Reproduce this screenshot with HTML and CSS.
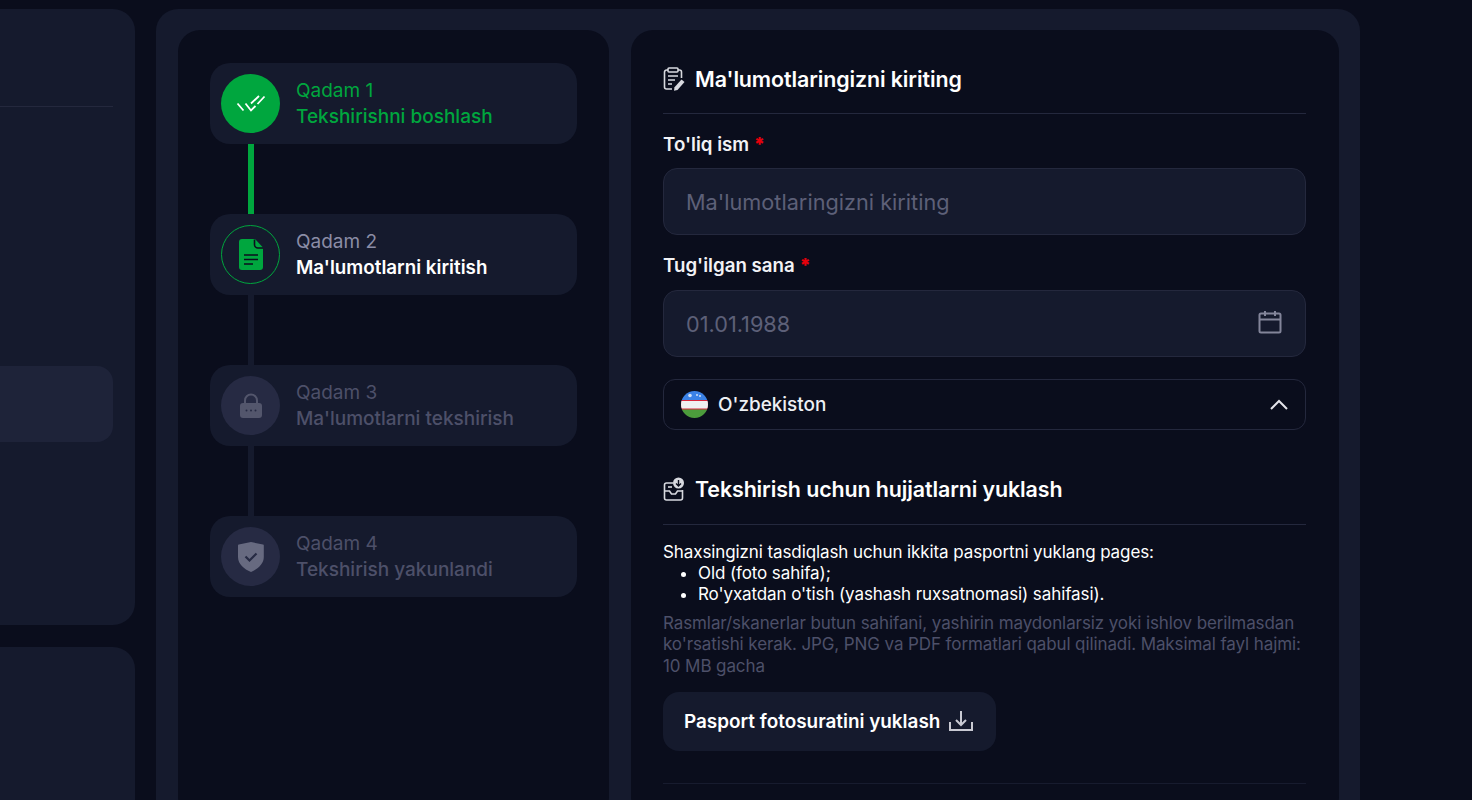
FILE: index.html
```html
<!DOCTYPE html>
<html lang="uz">
<head>
<meta charset="utf-8">
<title>Tekshirish</title>
<link rel="stylesheet" href="styles.css">
</head>
<body>
<div class="page">
  <aside class="side">
    <div class="side-card top">
      <div class="side-rule"></div>
      <div class="side-active"></div>
    </div>
    <div class="side-card bottom"></div>
  </aside>
  <main class="panel">
    <section class="stepper">
      <div class="step done">
        <span class="badge"><svg width="30" height="18" viewBox="0 0 30 18" fill="none" stroke="#fff" stroke-width="1.800"><path d="M1.500 8.500l6 7M9.500 8.500l5.500 7 4.500-4.500M21.500 9l7-7.500M15 8.500l8-7.500"/></svg></span>
        <div class="step-text"><span class="num">Qadam 1</span><span class="name">Tekshirishni boshlash</span></div>
      </div>
      <div class="line green"></div>
      <div class="step current">
        <span class="badge"><svg width="26" height="33" viewBox="0 0 26 33"><path fill="#00a63e" d="M4 1h13l8 8.500V29a3 3 0 0 1-3 3H4a3 3 0 0 1-3-3V4a3 3 0 0 1 3-3z"/><path stroke="#0b0e1e" stroke-width="1.600" d="M16.500 1.500v5a3.500 3.500 0 0 0 3.500 3.500h5M6 17h14M6 21.500h14M6 26h9" fill="none"/></svg></span>
        <div class="step-text"><span class="num">Qadam 2</span><span class="name">Ma'lumotlarni kiritish</span></div>
      </div>
      <div class="line"></div>
      <div class="step locked">
        <span class="badge"><svg width="24" height="26" viewBox="0 0 24 26"><path fill="none" stroke="#53566c" stroke-width="2" d="M6 12V7.500a6 6 0 0 1 12 0V12"/><rect x="1" y="10" width="22" height="15" rx="3" fill="#53566c"/><circle cx="7.500" cy="17.500" r="1" fill="#262a43"/><circle cx="12" cy="17.500" r="1" fill="#262a43"/><circle cx="16.500" cy="17.500" r="1" fill="#262a43"/></svg></span>
        <div class="step-text"><span class="num">Qadam 3</span><span class="name">Ma'lumotlarni tekshirish</span></div>
      </div>
      <div class="line"></div>
      <div class="step locked">
        <span class="badge"><svg width="26" height="30" viewBox="0 0 26 30"><path fill="#676a80" d="M13 0l12 2.500a1 1 0 0 1 .8 1V15c0 7-6 12-12.800 15C6 27 0 22 0 15V3.500a1 1 0 0 1 .8-1z"/><path fill="none" stroke="#262a43" stroke-width="2.200" d="M7.500 14.500l4 4 7-7"/></svg></span>
        <div class="step-text"><span class="num">Qadam 4</span><span class="name">Tekshirish yakunlandi</span></div>
      </div>
    </section>
    <section class="form">
      <div class="heading">
        <svg class="hicon" width="22" height="24" viewBox="0 0 22 24" fill="none" stroke="#d8d9df" stroke-width="1.600"><path d="M5 3H3.500A2 2 0 0 0 1.500 5v15a2 2 0 0 0 2 2H9M15 3h1.500a2 2 0 0 1 2 2v6"/><rect x="5" y="1" width="10" height="4" rx="1"/><path d="M5 9h10M5 13h7M5 17h4"/><path fill="#d8d9df" stroke="none" d="M18.500 12.500l3 2.500-7 8-3.500 .8 .5-3.500z"/></svg>
        <h2>Ma'lumotlaringizni kiriting</h2>
      </div>
      <label class="label first">To'liq ism <b>*</b></label>
      <div class="field"><span>Ma'lumotlaringizni kiriting</span></div>
      <label class="label">Tug'ilgan sana <b>*</b></label>
      <div class="field"><span>01.01.1988</span>
        <svg class="cal" width="24" height="24" viewBox="0 0 24 24" fill="none" stroke="#83859a" stroke-width="2"><rect x="1.500" y="3.500" width="21" height="19" rx="1.500"/><path d="M1.500 9.500h21M7 1v5M17 1v5"/></svg>
      </div>
      <div class="select">
        <svg class="flag" width="27" height="27" viewBox="0 0 27 27"><clipPath id="flagclip"><circle cx="13.500" cy="13.500" r="13.500"/></clipPath><g clip-path="url(#flagclip)"><rect width="27" height="10" fill="#3b82e6"/><rect y="9" width="27" height="10" fill="#d8263a"/><rect y="10" width="27" height="7.500" fill="#f0f0f0"/><rect y="18.500" width="27" height="9" fill="#4c9c3c"/><circle cx="9" cy="4.500" r="1.800" fill="#cfe0f7"/><circle cx="16" cy="4" r="1" fill="#cfe0f7"/><circle cx="19" cy="5" r="1" fill="#cfe0f7"/></g></svg>
        <span class="country">O'zbekiston</span>
        <svg width="18" height="11" viewBox="0 0 18 11" fill="none" stroke="#e4e4ea" stroke-width="2"><path d="M1 10l8-8 8 8"/></svg>
      </div>
      <div class="heading second">
        <svg class="hicon" width="22" height="24" viewBox="0 0 22 24" fill="none" stroke="#d8d9df" stroke-width="1.600"><path d="M10 6H3.500a2 2 0 0 0-2 2v13a2 2 0 0 0 2 2h14a2 2 0 0 0 2-2v-8"/><path d="M1.500 14h5l2 3h4l2-3h5"/><path d="M5 10h4"/><circle cx="15.500" cy="6" r="5.500" fill="#d8d9df" stroke="none"/><path stroke="#0a0d1c" stroke-width="1.400" d="M15.500 3v6M13 6.500l2.500 2.500 2.500-2.500"/></svg>
        <h2>Tekshirish uchun hujjatlarni yuklash</h2>
      </div>
      <div class="intro">
        <p>Shaxsingizni tasdiqlash uchun ikkita pasportni yuklang pages:</p>
        <ul>
          <li>Old (foto sahifa);</li>
          <li>Ro'yxatdan o'tish (yashash ruxsatnomasi) sahifasi).</li>
        </ul>
      </div>
      <p class="note">Rasmlar/skanerlar butun sahifani, yashirin maydonlarsiz yoki ishlov berilmasdan ko'rsatishi kerak. JPG, PNG va PDF formatlari qabul qilinadi. Maksimal fayl hajmi: 10 MB gacha</p>
      <button class="upload">Pasport fotosuratini yuklash
        <svg width="24" height="22" viewBox="0 0 24 22" fill="none" stroke="#c9cad3" stroke-width="2"><path d="M1 12v8h22v-8M12 1v13M7 10l5 5 5-5"/></svg>
      </button>
      <div class="rule"></div>
    </section>
  </main>
</div>
</body>
</html>
```
FILE: styles.css
```css
* { box-sizing: border-box; }
html, body { margin: 0; height: 800px; overflow: hidden; background: #0a0d1c; }
body { font-family: Inter, "Liberation Sans", sans-serif; color: #fff; }
.page { display: flex; gap: 21px; height: 800px; padding-top: 9px; width: 1360px; }
.side { width: 135px; flex: none; display: flex; flex-direction: column; gap: 22px; }
.side-card { background: #151a2d; border-radius: 0 22px 22px 0; }
.side-card.top { height: 616px; padding-top: 97px; padding-right: 22px; }
.side-card.bottom { flex: 1; margin-bottom: -30px; }
.side-rule { height: 1px; background: #24283d; }
.side-active { height: 76px; margin-top: 259px; background: #1e2339; border-radius: 0 16px 16px 0; }

.panel { flex: 1; display: flex; gap: 22px; padding: 21px 21px 21px 22px; background: #151a2d; border-radius: 22px 22px 0 0; margin-bottom: -40px; }
.stepper { width: 431px; flex: none; background: #0a0d1c; border-radius: 22px; padding: 33px 32px; }
.step { height: 81px; background: #151a2d; border-radius: 20px; display: flex; align-items: center; gap: 16px; padding-left: 11px; }
.badge { width: 59px; height: 59px; border-radius: 50%; flex: none; display: flex; align-items: center; justify-content: center; }
.step.done .badge { background: #00a63e; }
.step.current .badge { border: 1.5px solid #00a63e; }
.step.locked .badge { background: #262a43; }
.step-text { display: flex; flex-direction: column; gap: 2px; font-size: 19px; line-height: 24px; }
.num { color: #8b8da6; }
.name { font-weight: 600; color: #fff; font-size: 18.800px; }
.done .num, .done .name { color: #00a63e; font-weight: 400; }
.done .name { font-weight: 500; font-size: 19px; }
.locked .num { color: #4d5069; font-weight: 400; }
.locked .name { color: #4d5069; font-weight: 500; font-size: 19px; }
.line { width: 6px; height: 70px; margin-left: 38px; background: #151a2d; }
.line.green { background: #00a63e; }

.form { flex: 1; background: #0a0d1c; border-radius: 22px; padding: 33px 33px 0 32px; }
.heading { display: flex; align-items: center; gap: 10px; height: 51px; padding-bottom: 18px; border-bottom: 1px solid #24283d; }
.heading h2 { margin: 0; font-size: 21.400px; font-weight: 600; letter-spacing: -0.1px; }
.hicon { flex: none; }
.label { display: block; font-size: 18.700px; font-weight: 600; line-height: 24px; margin: 19px 0 12px; color: #f2f2f5; }
.label.first { margin-bottom: 11px; }
.label b { color: #e7000b; }
.field { height: 67px; background: #151a2d; border: 1px solid #24283d; border-radius: 14px; display: flex; align-items: center; justify-content: space-between; padding: 0 23px 0 22px; font-size: 21.700px; color: #5d6078; }
.cal { margin-top: -3px; }
.select { height: 51px; margin-top: 22px; border: 1px solid #24283d; border-radius: 12px; display: flex; align-items: center; padding: 0 17px; gap: 10px; }
.country { flex: 1; font-size: 18.900px; font-weight: 500; color: #eef0f4; }
.flag { flex: none; }
.heading.second { margin-top: 38px; height: 57px; padding-bottom: 14px; }
.intro { font-size: 17px; line-height: 21px; margin-top: 17px; letter-spacing: -0.1px; color: #fff; }
.intro p { margin: 0; }
.intro ul { margin: 0; padding-left: 35px; }
.note { margin: 7.500px 0 0; font-size: 17px; line-height: 21.500px; color: #4d5069; letter-spacing: -0.1px; }
.upload { display: inline-flex; align-items: center; gap: 9px; height: 59px; margin-top: 14.500px; padding: 0 23px 0 21px; background: #151a2d; border: 0; border-radius: 16px; font: 600 18.900px Inter, sans-serif; color: #fff; }
.rule { height: 1px; margin-top: 32px; background: #171b2e; }
```
